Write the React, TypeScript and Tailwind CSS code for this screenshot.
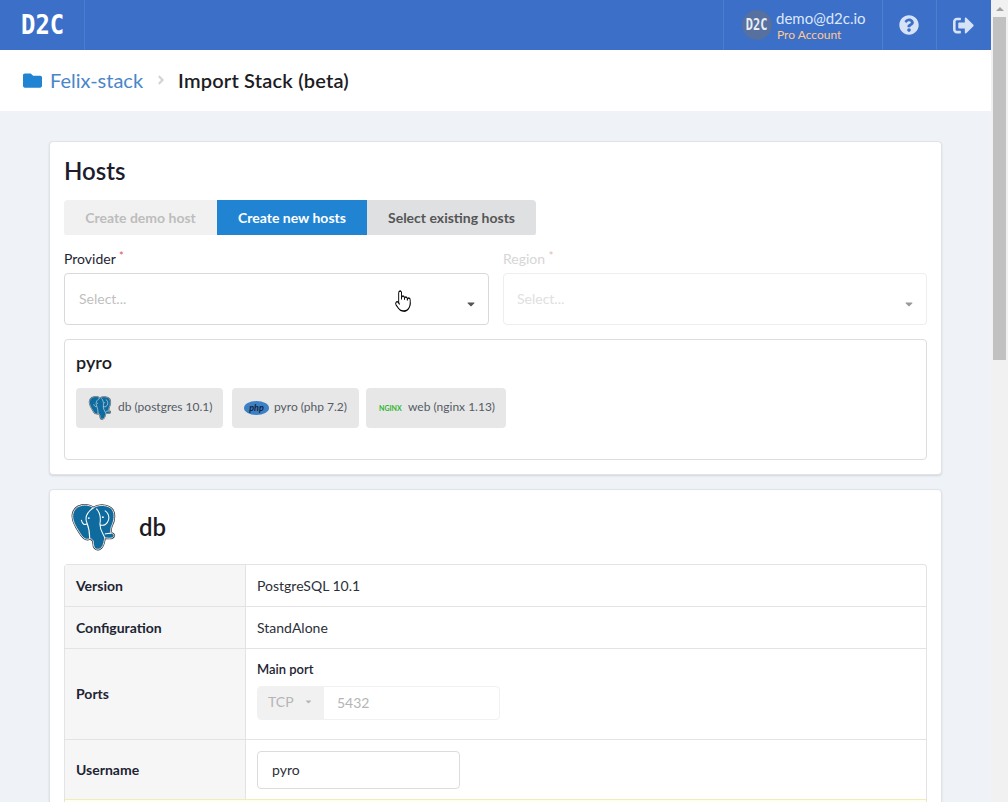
import { FaFolder, FaQuestionCircle, FaSignOutAlt, FaCaretDown, FaAngleRight } from "react-icons/fa";
import { LuPointer } from "react-icons/lu";

const BODY =
  "M10 2 C16 0 21 2 24 4 C30 0 40 1 44 6 C47 11 46 18 43 24 C42 28 42 30 43 31 C46 32 47 34 44 36 C41 37 38 36 36 36 C35 40 35 46 30 48 C26 49 24 46 24 42 C24 38 22 37 20 37 C15 39 12 35 9 30 C5 24 1 17 2 11 C3 6 6 3 10 2 Z";

function Elephant({ size }: { size: number }) {
  return (
    <svg width={size} height={size} viewBox="0 0 48 50" className="shrink-0">
      <path d={BODY} fill="#666" stroke="#333" strokeWidth="2.4" />
      <path d={BODY} fill="#0f6a9e" stroke="#fff" strokeWidth="0.9" />
      <path d="M24 4 C18 8 14 13 17 20 C19 25 20 31 20 37 M36 36 C34 31 30 27 31 20 C32 13 30 8 27 5 M31 22 C35 24 39 21 40 17 C41 13 39 9 36 7 M17 21 C14 23 12 21 11 17 M36 32 C38 32 41 31 43 31" fill="none" stroke="#fff" strokeWidth="1.1" />
      <circle cx="19" cy="15" r="1" fill="#fff" />
      <circle cx="34" cy="14" r="1" fill="#fff" />
    </svg>
  );
}

function Chip({ icon, label, className }: { icon: React.ReactNode; label: string; className: string }) {
  return (
    <div className={`flex h-10 items-center rounded bg-[#e7e7e7] text-[12px] text-[#555b66] ${className}`}>
      {icon}
      <span className="relative -top-px">{label}</span>
    </div>
  );
}

function Row({ label, className, labelClass, children }: { label: string; className: string; labelClass?: string; children: React.ReactNode }) {
  return (
    <div className={`flex border-b border-[#e3e3e3] ${className}`}>
      <div className={`flex w-[181px] shrink-0 items-center border-r border-[#e3e3e3] bg-[#f6f6f6] pl-[11px] text-[14px] font-bold text-[#1d2433] ${labelClass ?? ""}`}>
        {label}
      </div>
      <div className="flex-1 pl-[11px] text-[14px] text-[#2b2f38]">{children}</div>
    </div>
  );
}

export default function App() {
  return (
    <div className="relative flex h-[802px] w-[1008px] overflow-hidden bg-[#eff3f8] font-['Lato','Liberation_Sans',sans-serif]">
      <div className="w-[991px] shrink-0">
        <header className="flex h-[50px] items-stretch bg-[#3b6fc8]">
          <div className="flex w-[85px] items-center border-r border-[#4d7dcf] pl-[21px]">
            <span className="inline-block origin-left scale-x-[0.92] font-['DejaVu_Sans_Mono',monospace] text-[26px] leading-none font-bold text-white">D2C</span>
          </div>
          <div className="flex-1" />
          <div className="flex w-[160px] items-center border-x border-[#4d7dcf] pl-[18px]">
            <div className="flex h-[30px] w-[30px] items-center justify-center rounded-full bg-[#56709f]">
              <span className="inline-block scale-x-[0.8] font-['DejaVu_Sans_Mono',monospace] text-[15px] font-bold text-[#e8edf5]">D2C</span>
            </div>
            <div className="ml-[4px] flex flex-col">
              <span className="text-[15px] leading-[18px] text-[#dbe7fb]">demo@d2c.io</span>
              <span className="pl-[1px] text-[12px] leading-[15px] text-[#ffc98f]">Pro Account</span>
            </div>
          </div>
          <div className="flex w-[54px] items-center justify-center border-r border-[#4d7dcf] pr-[2px]">
            <FaQuestionCircle className="text-[#d6e2f6]" size={20} />
          </div>
          <div className="flex w-[54px] items-center justify-center pr-[2px]">
            <FaSignOutAlt className="text-[#d6e2f6]" size={21} />
          </div>
        </header>

        <div className="flex h-[61px] items-center bg-white pb-[1px] pl-[23px]">
          <FaFolder className="text-[#2184d3]" size={19} />
          <span className="ml-[8px] text-[20px] text-[#4a86c8]">Felix-stack</span>
          <FaAngleRight className="mr-[10px] ml-[11px] text-[#d4d4d4]" size={14} />
          <span className="text-[20px] font-semibold tracking-[0.2px] text-[#1c1c24]">Import Stack (beta)</span>
        </div>

        <main className="px-[49px] pt-[30px]">
          <section className="h-[334px] rounded border border-[#dfe3e8] bg-white px-[14px] shadow-[0_1px_2px_rgba(0,0,0,0.12)]">
            <h2 className="pt-[13px] text-[24px] leading-[32px] font-semibold text-[#1c1c2e]">Hosts</h2>
            <div className="mt-[13px] flex h-9 w-fit overflow-hidden rounded pb-[1px] text-[14px] font-bold">
              <div className="flex w-[153px] items-center justify-center bg-[#f1f1f1] text-[#bdbdbd]">Create demo host</div>
              <div className="flex w-[150px] items-center justify-center bg-[#2184d3] text-white">Create new hosts</div>
              <div className="flex w-[169px] items-center justify-center bg-[#dfe0e2] text-[#555]">Select existing hosts</div>
            </div>
            <div className="mt-[12px] flex gap-[14px]">
              <div className="w-[425px]">
                <label className="block h-[25px] text-[14px] leading-[22px] text-[#1d2433]">
                  Provider <span className="relative -top-1 text-[11px] text-[#d9534f]">*</span>
                </label>
                <div className="flex h-[52px] items-center justify-between rounded border border-[#d9d9d9] bg-white pr-[11px] pb-[2px] pl-[14px] text-[14px] text-[#bfbfbf]">
                  <span>Select...</span>
                  <FaCaretDown className="mt-3 text-[#555]" size={12} />
                </div>
              </div>
              <div className="w-[424px]">
                <label className="block h-[25px] text-[14px] leading-[22px] text-[#d6d6d6]">
                  Region <span className="relative -top-1 text-[11px] text-[#e6b8b6]">*</span>
                </label>
                <div className="flex h-[52px] items-center justify-between rounded border border-[#eeeeee] bg-white pr-[11px] pb-[2px] pl-[13px] text-[14px] text-[#e0e0e0]">
                  <span>Select...</span>
                  <FaCaretDown className="mt-3 text-[#999]" size={12} />
                </div>
              </div>
            </div>
            <div className="mt-[14px] h-[121px] rounded border border-[#dddddd] px-[11px]">
              <h3 className="pt-[10px] pb-[1px] text-[18px] leading-[24px] font-semibold text-[#1c1c24]">pyro</h3>
              <div className="mt-[13px] flex">
                <Chip className="w-[147px] pl-[12px]" label="db (postgres 10.1)" icon={<span className="mr-[6px]"><Elephant size={24} /></span>} />
                <Chip
                  className="ml-[9px] w-[127px] pl-[12px]"
                  label="pyro (php 7.2)"
                  icon={
                    <span className="mr-[5px] flex h-[14px] w-[25px] items-center justify-center rounded-[50%] bg-[#3c81c6] text-[9px] font-bold text-[#14233c] italic">php</span>
                  }
                />
                <Chip
                  className="ml-[7px] w-[140px] pl-[13px]"
                  label="web (nginx 1.13)"
                  icon={<span className="mr-[5px] w-[24px] text-[7px] font-bold text-[#2fb52f]">NGINX</span>}
                />
              </div>
            </div>
          </section>

          <section className="mt-[14px] rounded border border-[#dfe3e8] bg-white px-[14px] shadow-[0_1px_2px_rgba(0,0,0,0.12)]">
            <div className="flex h-[74px] items-center pl-[6px]">
              <Elephant size={47} />
              <h2 className="ml-[22px] text-[24px] font-semibold text-[#1c1c24]">db</h2>
            </div>
            <div className="rounded-t border-x border-t border-[#e3e3e3]">
              <Row label="Version" className="h-[42px]">
                <div className="flex h-full items-center">PostgreSQL 10.1</div>
              </Row>
              <Row label="Configuration" className="h-[42px]">
                <div className="flex h-full items-center">StandAlone</div>
              </Row>
              <Row label="Ports" className="h-[91px]" labelClass="pb-[2px]">
                <div className="pt-[11px] text-[13px] leading-[18px] font-semibold text-[#1d2433]">Main port</div>
                <div className="mt-[8px] flex h-[34px] w-[243px] overflow-hidden rounded border border-[#f1f1f1]">
                  <div className="flex w-[66px] items-center justify-between bg-[#f1f1f1] pr-[11px] pb-[3px] pl-[10px] text-[14px] text-[#b5b5b5]">
                    TCP <FaCaretDown className="text-[#b5b5b5]" size={9} />
                  </div>
                  <div className="flex items-center pb-[1px] pl-[13px] text-[14px] text-[#b5b5b5]">5432</div>
                </div>
              </Row>
              <Row label="Username" className="h-[60px] border-b-[#f0edb8]">
                <div className="flex h-full items-center">
                  <div className="flex h-[38px] w-[203px] items-center rounded border border-[#dcdcdc] pl-[14px] text-[14px]">pyro</div>
                </div>
              </Row>
              <div className="h-10 bg-[#fffff0]" />
            </div>
          </section>
        </main>
      </div>

      <div className="flex w-[17px] shrink-0 flex-col bg-[#f1f1f1]">
        <div className="flex h-[17px] items-center justify-center">
          <div className="h-0 w-0 border-x-[4px] border-b-[4px] border-x-transparent border-b-[#a3a3a3]" />
        </div>
        <div className="mx-auto h-[343px] w-[13px] bg-[#c1c1c1]" />
      </div>

      <LuPointer className="absolute top-[289px] left-[391px] scale-x-[0.72] fill-white text-black" size={24} strokeWidth={1.3} />
    </div>
  );
}
